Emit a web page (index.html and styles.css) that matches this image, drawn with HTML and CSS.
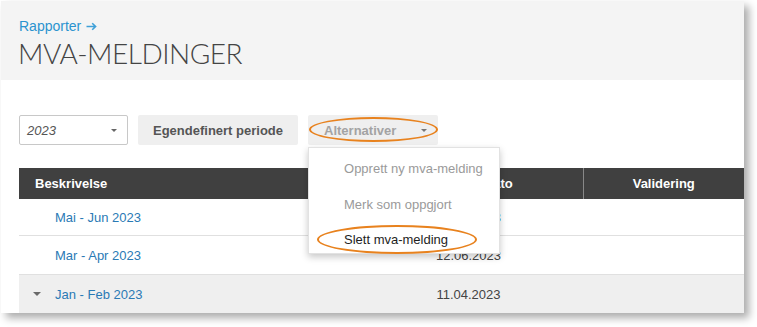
FILE: index.html
```html
<!DOCTYPE html>
<html lang="no">
<head>
<meta charset="utf-8">
<title>MVA-meldinger</title>
<link rel="stylesheet" href="styles.css">
</head>
<body>
<div class="card">
  <header class="page-header">
    <a class="crumb" href="#">Rapporter <svg class="crumb-arrow" width="11" height="9" viewBox="0 0 11 9" aria-hidden="true"><path d="M0.5 4.5H9.6M6.2 1.2L9.6 4.5L6.2 7.8" fill="none" stroke="#3fa0d8" stroke-width="1.6"/></svg></a>
    <h1 class="title">MVA-MELDINGER</h1>
  </header>

  <div class="toolbar">
    <div class="select">
      <span class="select-value">2023</span>
      <span class="caret"></span>
    </div>
    <button class="btn">Egendefinert periode</button>
    <div class="menu-wrap">
      <button class="btn btn-muted btn-alt">Alternativer <span class="caret caret-alt"></span></button>
      <span class="mark mark-alt"></span>
      <ul class="menu">
        <li class="menu-item disabled">Opprett ny mva-melding</li>
        <li class="menu-item disabled">Merk som oppgjort</li>
        <li class="menu-item active">Slett mva-melding</li>
      </ul>
      <span class="mark mark-del"></span>
    </div>
  </div>

  <table class="grid">
    <colgroup>
      <col class="c1"><col class="c2"><col class="c3">
    </colgroup>
    <thead>
      <tr>
        <th class="th-left">Beskrivelse</th>
        <th>Leveringsdato</th>
        <th class="th-div">Validering</th>
      </tr>
    </thead>
    <tbody>
      <tr class="r1">
        <td class="desc"><a href="#">Mai - Jun 2023</a></td>
        <td class="date"><a href="#">10.08.2023</a></td>
        <td></td>
      </tr>
      <tr class="r2">
        <td class="desc"><a href="#">Mar - Apr 2023</a></td>
        <td class="date">12.06.2023</td>
        <td></td>
      </tr>
      <tr class="r3 open">
        <td class="desc"><span class="tri"></span><a href="#">Jan - Feb 2023</a></td>
        <td class="date">11.04.2023</td>
        <td></td>
      </tr>
    </tbody>
  </table>
</div>
</body>
</html>
```

FILE: styles.css
```css
html, body {
  margin: 0;
  padding: 0;
  background: #fff;
}
body {
  width: 757px;
  height: 327px;
  overflow: hidden;
  padding: 1px 0 0 1px;
  box-sizing: border-box;
  font-family: "Liberation Sans", Arial, sans-serif;
  font-size: 13px;
  color: #444;
}
.card {
  position: relative;
  width: 743px;
  height: 312px;
  background: #fff;
  box-shadow: 5px 5px 8px rgba(0, 0, 0, 0.33);
  overflow: hidden;
}
.page-header {
  background: #f4f4f4;
  height: 79px;
  box-sizing: border-box;
  padding: 17px 0 0 18px;
}
.crumb {
  display: block;
  font-size: 14px;
  line-height: 16px;
  color: #2b93cf;
  text-decoration: none;
}
.crumb-arrow {
  vertical-align: 0px;
  margin-left: 1px;
}
.title {
  margin: 1px 0 0 -1px;
  font-family: Lato, "Liberation Sans", sans-serif;
  font-weight: 300;
  font-size: 28px;
  line-height: 36px;
  letter-spacing: -0.5px;
  color: #444;
}
.toolbar {
  display: flex;
  gap: 10px;
  margin: 35px 0 0 18px;
  height: 30px;
}
.select {
  width: 109px;
  height: 30px;
  box-sizing: border-box;
  border: 1px solid #c8c8c8;
  border-radius: 2px;
  background: #fff;
  display: flex;
  align-items: center;
  justify-content: space-between;
  padding: 0 10px 0 7px;
}
.select-value {
  font-style: italic;
  color: #555;
  font-size: 13px;
}
.caret {
  width: 0;
  height: 0;
  border-left: 3px solid transparent;
  border-right: 3px solid transparent;
  border-top: 3px solid #666;
}
.btn {
  height: 30px;
  border: 0;
  border-radius: 2px;
  background: #efefef;
  font-family: "Liberation Sans", Arial, sans-serif;
  font-size: 13px;
  font-weight: 700;
  color: #555;
  padding: 0 15px;
}
.menu-wrap {
  position: relative;
}
.btn-alt {
  width: 130px;
  display: flex;
  align-items: center;
  justify-content: space-between;
  padding: 0 11px 0 16px;
  color: #a3a3a3;
}
.caret-alt {
  border-top-color: #777;
}
.menu {
  position: absolute;
  top: 32px;
  left: 0;
  width: 192px;
  height: 107px;
  box-sizing: border-box;
  margin: 0;
  padding: 3px 0 0;
  list-style: none;
  background: #fff;
  border: 1px solid #e2e2e2;
  box-shadow: 0 3px 7px rgba(0, 0, 0, 0.22);
  z-index: 5;
}
.menu-item {
  height: 35.5px;
  line-height: 35px;
  padding-left: 35px;
  font-size: 13px;
  white-space: nowrap;
}
.menu-item.disabled {
  color: #9a9a9a;
}
.menu-item.active {
  color: #1e1e1e;
}
.mark {
  position: absolute;
  border: 2.5px solid #e8821e;
  border-radius: 50%;
  box-sizing: border-box;
  z-index: 6;
  pointer-events: none;
}
.mark-alt {
  left: 1px;
  top: 2px;
  width: 129px;
  height: 25px;
}
.mark-del {
  left: 9px;
  top: 110px;
  width: 160px;
  height: 29px;
}
.grid {
  margin: 23px 0 0 18px;
  border-collapse: collapse;
  table-layout: fixed;
  width: 725px;
}
.c1 { width: 335px; }
.c2 { width: 229px; }
.c3 { width: 161px; }
.grid th {
  background: #404040;
  color: #fff;
  font-weight: 700;
  font-size: 13px;
  height: 31px;
  padding: 0;
  text-align: center;
}
.grid th.th-left {
  text-align: left;
  padding-left: 16px;
}
.grid th.th-div {
  border-left: 1px solid #888;
}
.grid td {
  padding: 0;
  border-bottom: 1px solid #e0e0e0;
  font-size: 13px;
}
.r1 td { height: 36px; }
.r2 td { height: 38px; }
.r3 td { height: 38px; background: #efefef; border-bottom: 0; }
.grid a {
  color: #2a7ab5;
  text-decoration: none;
}
.desc {
  padding-left: 36px !important;
  position: relative;
}
.date {
  text-align: center;
  color: #444;
}
.tri {
  position: absolute;
  left: 14px;
  top: 17px;
  width: 0;
  height: 0;
  border-left: 4px solid transparent;
  border-right: 4px solid transparent;
  border-top: 4px solid #6a6a6a;
}
```
